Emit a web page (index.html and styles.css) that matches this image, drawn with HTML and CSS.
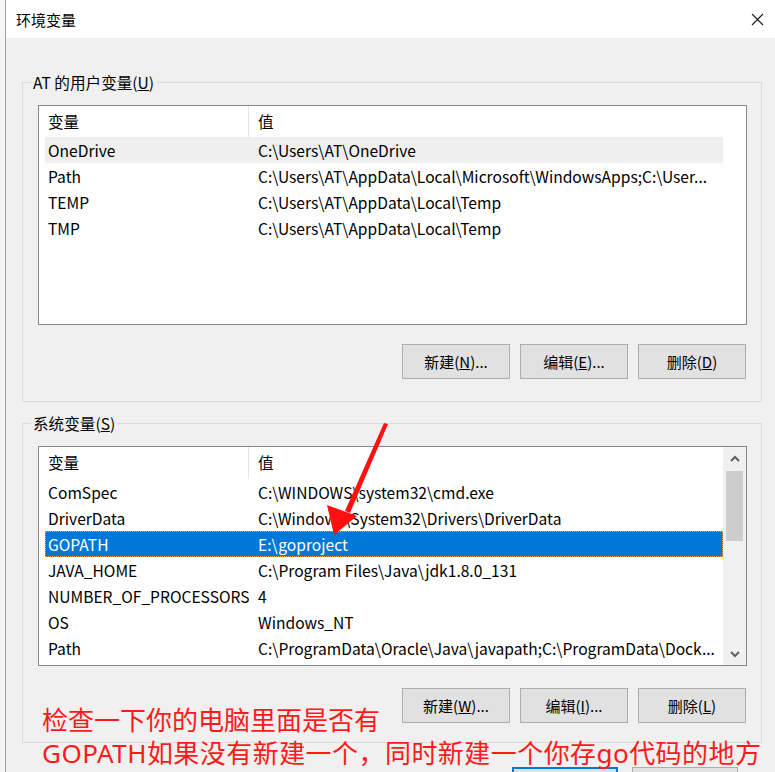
FILE: index.html
```html
<!DOCTYPE html>
<html lang="zh-CN">
<head>
    <meta charset="UTF-8">
    <meta name="viewport" content="width=device-width, initial-scale=1.0">
    <title>环境变量</title>
    <link rel="stylesheet" href="styles.css">
</head>
<body>
    <div class="screen">
        <div class="edge"></div>
        <div class="dialog">
            <div class="titlebar">
                <span class="title">环境变量</span>
                <svg class="close" width="13" height="13" viewBox="0 0 13 13">
                    <path d="M1 1L12 12M12 1L1 12" stroke="#1a1a1a" stroke-width="1.1" fill="none"/>
                </svg>
            </div>

            <div class="content">
                <fieldset class="group user">
                    <legend>AT 的用户变量(<u>U</u>)</legend>
                    <div class="list">
                        <div class="table">
                            <div class="head"><span>变量</span><span>值</span></div>
                            <div class="row hover"><span>OneDrive</span><span>C:\Users\AT\OneDrive</span></div>
                            <div class="row"><span>Path</span><span>C:\Users\AT\AppData\Local\Microsoft\WindowsApps;C:\User...</span></div>
                            <div class="row"><span>TEMP</span><span>C:\Users\AT\AppData\Local\Temp</span></div>
                            <div class="row"><span>TMP</span><span>C:\Users\AT\AppData\Local\Temp</span></div>
                        </div>
                    </div>
                    <div class="buttons">
                        <button class="btn">新建(<u>N</u>)...</button>
                        <button class="btn">编辑(<u>E</u>)...</button>
                        <button class="btn">删除(<u>D</u>)</button>
                    </div>
                </fieldset>

                <fieldset class="group system">
                    <legend>系统变量(<u>S</u>)</legend>
                    <div class="list">
                        <div class="table">
                            <div class="head"><span>变量</span><span>值</span></div>
                            <div class="row"><span>ComSpec</span><span>C:\WINDOWS\system32\cmd.exe</span></div>
                            <div class="row"><span>DriverData</span><span>C:\Windows\System32\Drivers\DriverData</span></div>
                            <div class="row selected"><span>GOPATH</span><span>E:\goproject</span></div>
                            <div class="row"><span>JAVA_HOME</span><span>C:\Program Files\Java\jdk1.8.0_131</span></div>
                            <div class="row"><span>NUMBER_OF_PROCESSORS</span><span>4</span></div>
                            <div class="row"><span>OS</span><span>Windows_NT</span></div>
                            <div class="row"><span>Path</span><span>C:\ProgramData\Oracle\Java\javapath;C:\ProgramData\Dock...</span></div>
                        </div>
                        <div class="scroll">
                            <div class="step">
                                <svg width="10" height="7" viewBox="0 0 10 7"><path d="M1 6L5 2L9 6" stroke="#606060" stroke-width="2" fill="none"/></svg>
                            </div>
                            <div class="thumb"></div>
                            <div class="track"></div>
                            <div class="step">
                                <svg width="10" height="7" viewBox="0 0 10 7"><path d="M1 1L5 5L9 1" stroke="#606060" stroke-width="2" fill="none"/></svg>
                            </div>
                        </div>
                    </div>
                    <div class="buttons">
                        <button class="btn">新建(<u>W</u>)...</button>
                        <button class="btn">编辑(<u>I</u>)...</button>
                        <button class="btn">删除(<u>L</u>)</button>
                    </div>
                </fieldset>

                <div class="footer">
                    <button class="btn ok"></button>
                    <button class="btn cancel"></button>
                </div>
            </div>
        </div>

        <!-- red annotation drawn over the screenshot -->
        <svg class="arrow" width="80" height="130" viewBox="320 415 80 130">
            <polygon points="384,423 388,424 350,513 345,511" fill="#ff1010"/>
            <polygon points="327,505 357,516 334,535" fill="#ff1010"/>
        </svg>
        <div class="note">
            <div>检查一下你的电脑里面是否有</div>
            <div class="wide">GOPATH如果没有新建一个，同时新建一个你存go代码的地方</div>
        </div>
    </div>
</body>
</html>
```

FILE: styles.css
```css
body {
    margin: 0;
    background: #f0f0f0;
    font-family: "Noto Sans CJK SC", sans-serif;
    font-size: 15.6px;
    color: #000;
    overflow: hidden;
}
.screen {
    position: relative;
    display: flex;
    height: 772px;
    overflow: hidden;
}
.edge {
    width: 5px;
    background: #f6f6f6;
    border-right: 1px solid #a0a0a0;
}
.dialog {
    flex: 1;
    display: flex;
    flex-direction: column;
    background: #f0f0f0;
}
.titlebar {
    height: 38px;
    flex: none;
    background: #fff;
    display: flex;
    align-items: center;
    justify-content: space-between;
    padding: 0 11px 0 10px;
    font-size: 15px;
}
.content {
    padding: 34px 13px 0 16px;
}
.group {
    margin: 0;
    width: 740px;
    box-sizing: border-box;
    border: 1px solid #dcdcdc;
    padding: 13px 14px 22px 15px;
}
.group.system {
    margin-top: 11px;
    padding-bottom: 19px;
}
.group legend {
    padding: 0 2px;
    margin-left: -7px;
    line-height: 20px;
}
.list {
    height: 220px;
    box-sizing: border-box;
    border: 1px solid #828790;
    background: #fff;
    display: flex;
}
.table {
    width: 684px;
    flex: none;
    overflow: hidden;
}
.head {
    display: grid;
    grid-template-columns: 210px 1fr;
    height: 31px;
    line-height: 31px;
}
.system .head {
    height: 32px;
}
.head span {
    padding-left: 9px;
}
.head span:first-child {
    border-right: 1px solid #e5e5e5;
}
.row {
    margin-left: 6px;
    display: grid;
    grid-template-columns: 204px 473px;
    height: 26px;
    line-height: 26px;
}
.row span {
    padding-left: 3px;
    white-space: nowrap;
    overflow: hidden;
}
.row span + span {
    padding-left: 9px;
}
.row.hover {
    background: #efefef;
}
.row.selected {
    background: #0078d7;
    color: #fff;
    outline: 1px dotted #f0a040;
    outline-offset: -1px;
}
.scroll {
    flex: 1;
    background: #f0f0f0;
    display: flex;
    flex-direction: column;
    align-items: center;
}
.step {
    height: 22px;
    display: flex;
    align-items: center;
    justify-content: center;
}
.thumb {
    width: 17px;
    height: 70px;
    margin-top: 2px;
    background: #cdcdcd;
}
.track {
    flex: 1;
}
.buttons {
    display: flex;
    justify-content: flex-end;
    gap: 10px;
    margin: 19px 1px 0 0;
}
.system .buttons {
    margin-top: 22px;
}
.btn {
    width: 108px;
    height: 35px;
    padding: 0;
    border: 1px solid #adadad;
    background: #e1e1e1;
    font: inherit;
    font-size: 15px;
    color: #000;
}
.footer {
    display: flex;
    justify-content: flex-end;
    gap: 14px;
    margin-top: 24px;
    padding-right: 24px;
}
.footer .btn {
    width: 106px;
}
.footer .ok {
    border-color: #0078d7;
    box-shadow: inset 0 0 0 1px #0078d7;
}
.arrow {
    position: absolute;
    left: 320px;
    top: 415px;
}
.note {
    position: absolute;
    left: 42px;
    top: 704px;
    color: #ff1a1a;
    font-family: "Noto Sans", "Noto Sans CJK SC", sans-serif;
    font-size: 26px;
    line-height: 33px;
    white-space: nowrap;
}
.note .wide {
    letter-spacing: 0.45px;
}
```
